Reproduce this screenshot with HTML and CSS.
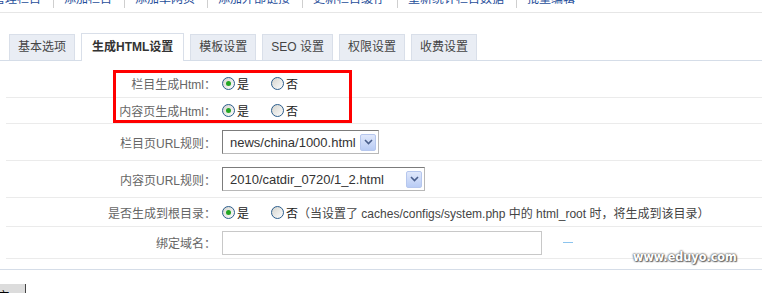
FILE: index.html
```html
<!DOCTYPE html>
<html>
  <head>
    <meta charset="UTF-8" />
    <title>栏目设置</title>
    <link rel="stylesheet" href="styles.css">
  </head>
  <body>
    <div class="topnav">
      <div class="links">
        <a href="#">管理栏目</a>
        <a href="#">添加栏目</a>
        <a href="#">添加单网页</a>
        <a href="#">添加外部链接</a>
        <a href="#">更新栏目缓存</a>
        <a href="#">重新统计栏目数据</a>
        <a href="#">批量编辑</a>
      </div>
    </div>

    <div class="tabs">
      <span class="tab">基本选项</span>
      <span class="tab active">生成HTML设置</span>
      <span class="tab">模板设置</span>
      <span class="tab">SEO 设置</span>
      <span class="tab">权限设置</span>
      <span class="tab">收费设置</span>
    </div>

    <div class="panel">
      <div class="row r-radio">
        <div class="lbl">栏目生成Html：</div>
        <div class="ctl">
          <span class="opt"><i class="radio on"></i>是</span>
          <span class="opt"><i class="radio"></i>否</span>
        </div>
      </div>
      <div class="row r-radio2">
        <div class="lbl">内容页生成Html：</div>
        <div class="ctl">
          <span class="opt"><i class="radio on"></i>是</span>
          <span class="opt"><i class="radio"></i>否</span>
        </div>
      </div>
      <div class="row r-select">
        <div class="lbl">栏目页URL规则：</div>
        <div class="ctl">
          <div class="select s1">
            <span>news/china/1000.html</span>
            <span class="arrow"><svg width="9" height="6" viewBox="0 0 9 6"><path d="M1 1 L4.5 4.5 L8 1" fill="none" stroke="#4a5f8c" stroke-width="1.6"/></svg></span>
          </div>
        </div>
      </div>
      <div class="row r-select">
        <div class="lbl">内容页URL规则：</div>
        <div class="ctl">
          <div class="select s2">
            <span>2010/catdir_0720/1_2.html</span>
            <span class="arrow"><svg width="9" height="6" viewBox="0 0 9 6"><path d="M1 1 L4.5 4.5 L8 1" fill="none" stroke="#4a5f8c" stroke-width="1.6"/></svg></span>
          </div>
        </div>
      </div>
      <div class="row r-root">
        <div class="lbl">是否生成到根目录：</div>
        <div class="ctl">
          <span class="opt"><i class="radio on"></i>是</span>
          <span class="opt tight"><i class="radio"></i>否</span>
          <span class="note">（当设置了 caches/configs/system.php 中的 html_root 时，将生成到该目录）</span>
        </div>
      </div>
      <div class="row r-domain">
        <div class="lbl">绑定域名：</div>
        <div class="ctl">
          <input type="text" class="text-input">
          <span class="tip"></span>
        </div>
      </div>
    </div>

    <div class="actions">
      <button type="button">提交</button>
    </div>

    <div class="mark"></div>
    <div class="watermark">www.eduyo.com</div>
  </body>
</html>
```

FILE: styles.css
```css
* {
  box-sizing: border-box;
}
html, body {
  overflow: hidden;
}
body {
  margin: 0;
  position: relative;
  font: 12px "Liberation Sans", "Noto Sans CJK SC", sans-serif;
  color: #333;
  background: #fff;
}
.topnav {
  height: 13px;
  border-bottom: 1px solid #e6e6e6;
  overflow: hidden;
}
.links {
  display: flex;
  margin: -10px 0 0 -18px;
  line-height: 18px;
  white-space: nowrap;
}
.links a {
  color: #1f4e9a;
  text-decoration: none;
  padding: 0 12px 0 10px;
  border-left: 1px solid #cfcfcf;
}
.tabs {
  display: flex;
  align-items: flex-end;
  gap: 6px;
  margin-top: 21px;
  padding-left: 9px;
  height: 27px;
  border-bottom: 1px solid #d5dde8;
}
.tab {
  height: 26px;
  line-height: 25px;
  padding: 0 8px;
  background: #e9edf4;
  border: 1px solid #d9dfe9;
  border-bottom: none;
  color: #444;
  white-space: nowrap;
}
.tab.active {
  height: 28px;
  line-height: 27px;
  margin-bottom: -1px;
  padding: 0 10px;
  background: #fff;
  font-weight: bold;
  color: #333;
}
.panel {
  padding: 9px 0 10px 6px;
  border-bottom: 1px solid #d5dde8;
}
.row {
  display: grid;
  grid-template-columns: 210px 1fr;
  align-items: center;
  border-bottom: 1px solid #ebebeb;
}
.r-radio { height: 28px; }
.r-radio2 { height: 26px; }
.r-select { height: 37px; }
.r-root { height: 29px; }
.r-domain { height: 32px; }
.lbl {
  text-align: right;
  color: #666;
  white-space: nowrap;
}
.ctl {
  display: flex;
  align-items: center;
  padding-left: 6px;
  white-space: nowrap;
}
.opt {
  display: flex;
  align-items: center;
  margin-right: 22px;
  color: #222;
}
.opt.tight {
  margin-right: 0;
}
.radio {
  position: relative;
  display: inline-block;
  width: 13px;
  height: 13px;
  margin-right: 2px;
  border-radius: 50%;
  border: 1px solid #2b5d8c;
  background: linear-gradient(135deg, #d4d4ce, #fdfdfd);
}
.radio.on::after {
  content: "";
  position: absolute;
  left: 3px;
  top: 3px;
  width: 5px;
  height: 5px;
  border-radius: 50%;
  background: #22a622;
}
.note {
  color: #444;
}
.select {
  display: flex;
  align-items: center;
  justify-content: space-between;
  height: 24px;
  padding: 0 2px 0 7px;
  border: 1px solid #a9a9a9;
  border-color: #7c7c7c #b8b8b8 #b8b8b8 #7c7c7c;
  font-size: 13px;
  color: #333;
}
.s1 { width: 157px; }
.s2 { width: 203px; }
.arrow {
  display: flex;
  align-items: center;
  justify-content: center;
  width: 16px;
  height: 17px;
  border: 1px solid #b6c7ee;
  border-radius: 2px;
  background: linear-gradient(#e0e8fb, #b9ccf5);
}
.text-input {
  width: 320px;
  height: 24px;
  margin: 0;
  border: 1px solid #c8c8c8;
}
.tip {
  width: 10px;
  height: 1px;
  margin-left: 21px;
  background: #8cc4ee;
}
.actions {
  margin-top: 14px;
}
.actions button {
  margin-left: -30px;
  width: 56px;
  height: 22px;
  border: none;
  border-right: 1px solid #444;
  background: #dcdcdc;
  font: 12px "Liberation Sans", "Noto Sans CJK SC", sans-serif;
}
.mark {
  position: absolute;
  left: 113px;
  top: 70px;
  width: 239px;
  height: 53px;
  border: 3px solid #f00;
}
.watermark {
  position: absolute;
  left: 633px;
  top: 249px;
  font: bold 12.5px "DejaVu Sans Condensed", "DejaVu Sans", sans-serif;
  color: #fff;
  text-shadow: 0 0 2px #555, 0 0 2px #555, 1px 1px 1px #777;
}
```
